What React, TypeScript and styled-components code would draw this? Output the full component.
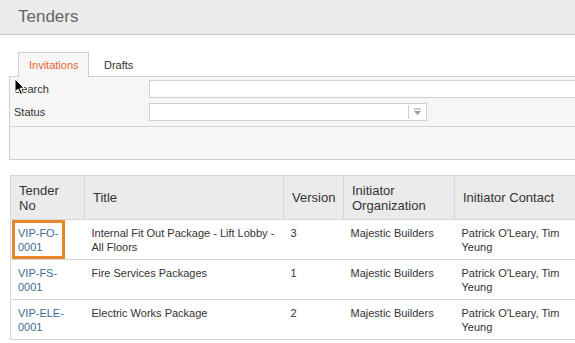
import * as React from "react";
import styled, { createGlobalStyle } from "styled-components";

const GlobalStyle = createGlobalStyle`
  html, body {
    margin: 0;
    padding: 0;
    background: #fff;
    overflow: hidden;
  }
  body {
    font-family: "Liberation Sans", Arial, sans-serif;
    color: #333;
  }
`;

const Page = styled.div`
  position: relative;
  width: 100%;
  overflow: hidden;
`;

const TopBar = styled.div`
  height: 35px;
  background: #ebebeb;
  border-bottom: 1px solid #c9c9c9;
  display: flex;
  align-items: center;
  padding-left: 18px;
  box-sizing: border-box;
  font-size: 17px;
  color: #666;
`;

const Tabs = styled.div`
  display: flex;
  align-items: flex-end;
  margin: 17px 0 0 18px;
  height: 25px;
  position: relative;
  z-index: 1;
`;

const Tab = styled.div<{ $active?: boolean }>`
  height: 25px;
  box-sizing: border-box;
  display: flex;
  align-items: center;
  font-size: 11px;
  border: 1px solid ${(p) => (p.$active ? "#cfcfcf" : "transparent")};
  border-bottom: none;
  background: ${(p) => (p.$active ? "#f7f7f7" : "transparent")};
  color: ${(p) => (p.$active ? "#e2652f" : "#333")};
  width: ${(p) => (p.$active ? "71px" : "auto")};
  padding-left: ${(p) => (p.$active ? "10px" : "14px")};
`;

const FilterPanel = styled.div`
  margin: -1px -1px 0 9px;
  border: 1px solid #cfcfcf;
  background: #f6f6f6;
  overflow: hidden;
`;

const FilterRows = styled.div`
  padding: 3px 0 5px;
  display: flex;
  flex-direction: column;
  gap: 5px;
  border-bottom: 1px solid #d3d3d3;
`;

const FilterRow = styled.div`
  display: flex;
  align-items: center;
  height: 18px;
`;

const FilterLabel = styled.div`
  width: 139px;
  flex: none;
  box-sizing: border-box;
  padding-left: 4px;
  font-size: 11px;
  color: #333;
`;

const TextInput = styled.div<{ $width?: number }>`
  height: 18px;
  box-sizing: border-box;
  border: 1px solid #cfcfcf;
  background: #fff;
  width: ${(p) => (p.$width ? `${p.$width}px` : "auto")};
  flex: ${(p) => (p.$width ? "none" : "1")};
  margin-right: ${(p) => (p.$width ? "0" : "-20px")};
  display: flex;
  justify-content: flex-end;
  align-items: center;
`;

const SelectArrow = styled.div`
  width: 17px;
  height: 14px;
  border-left: 1px solid #cfcfcf;
  display: flex;
  align-items: center;
  justify-content: center;
`;

const ButtonArea = styled.div`
  height: 32px;
`;

const Table = styled.table`
  margin: 15px 0 0 10px;
  border-collapse: collapse;
  width: calc(100% - 9px);
  table-layout: fixed;
  font-size: 11px;
`;

const HeadCell = styled.th<{ $width?: number }>`
  width: ${(p) => (p.$width ? `${p.$width}px` : "auto")};
  height: 44px;
  box-sizing: border-box;
  background: #ebebeb;
  border: 1px solid #d6d6d6;
  padding: 0 8px;
  text-align: left;
  font-weight: normal;
  font-size: 13px;
  line-height: 15px;
  color: #333;
`;

const Cell = styled.td`
  height: 40px;
  box-sizing: border-box;
  border-bottom: 1px solid #d6d6d6;
  padding: 6px 7px 0;
  vertical-align: top;
  line-height: 14px;
  color: #333;
`;

const FirstCell = styled(Cell)`
  border-left: 1px solid #d6d6d6;
  position: relative;
`;

const TenderLink = styled.a`
  color: #3b6d94;
  text-decoration: none;
  display: block;
  width: 50px;
`;

const Highlight = styled.div`
  position: absolute;
  left: 1px;
  top: 0;
  width: 53px;
  height: 39px;
  box-sizing: border-box;
  border: 3px solid #e8862a;
  pointer-events: none;
`;

const Cursor = styled.svg`
  position: absolute;
  left: 14px;
  top: 78px;
`;

const rows = [
  { no: ["VIP-FO-", "0001"], title: "Internal Fit Out Package - Lift Lobby - All Floors", version: 3, marked: true },
  { no: ["VIP-FS-", "0001"], title: "Fire Services Packages", version: 1 },
  { no: ["VIP-ELE-", "0001"], title: "Electric Works Package", version: 2 },
];

export default function App() {
  return (
    <Page>
      <GlobalStyle />
      <TopBar>Tenders</TopBar>
      <Tabs>
        <Tab $active>Invitations</Tab>
        <Tab>Drafts</Tab>
      </Tabs>
      <FilterPanel>
        <FilterRows>
          <FilterRow>
            <FilterLabel>Search</FilterLabel>
            <TextInput />
          </FilterRow>
          <FilterRow>
            <FilterLabel>Status</FilterLabel>
            <TextInput $width={278}>
              <SelectArrow>
                <svg width="9" height="8" viewBox="0 0 9 8">
                  <rect x="1" y="0.5" width="7" height="1" fill="#999" />
                  <path d="M1 3 L8 3 L4.5 7 Z" fill="#999" />
                </svg>
              </SelectArrow>
            </TextInput>
          </FilterRow>
        </FilterRows>
        <ButtonArea />
      </FilterPanel>
      <Table>
        <thead>
          <tr>
            <HeadCell $width={74}>Tender No</HeadCell>
            <HeadCell $width={199}>Title</HeadCell>
            <HeadCell $width={60}>Version</HeadCell>
            <HeadCell $width={111}>Initiator Organization</HeadCell>
            <HeadCell>Initiator Contact</HeadCell>
          </tr>
        </thead>
        <tbody>
          {rows.map((r) => (
            <tr key={r.no.join("")}>
              <FirstCell>
                <TenderLink href="#">
                  {r.no[0]}
                  <br />
                  {r.no[1]}
                </TenderLink>
                {r.marked && <Highlight />}
              </FirstCell>
              <Cell>{r.title}</Cell>
              <Cell>{r.version}</Cell>
              <Cell>Majestic Builders</Cell>
              <Cell>
                Patrick O'Leary, Tim
                <br />
                Yeung
              </Cell>
            </tr>
          ))}
        </tbody>
      </Table>
      <Cursor width="12" height="18" viewBox="0 0 12 18">
        <path d="M1 1 L1 14 L4 11 L6.5 16.5 L8.5 15.5 L6 10.2 L10.2 10.2 Z" fill="#000" stroke="#fff" strokeWidth="1" />
      </Cursor>
    </Page>
  );
}
